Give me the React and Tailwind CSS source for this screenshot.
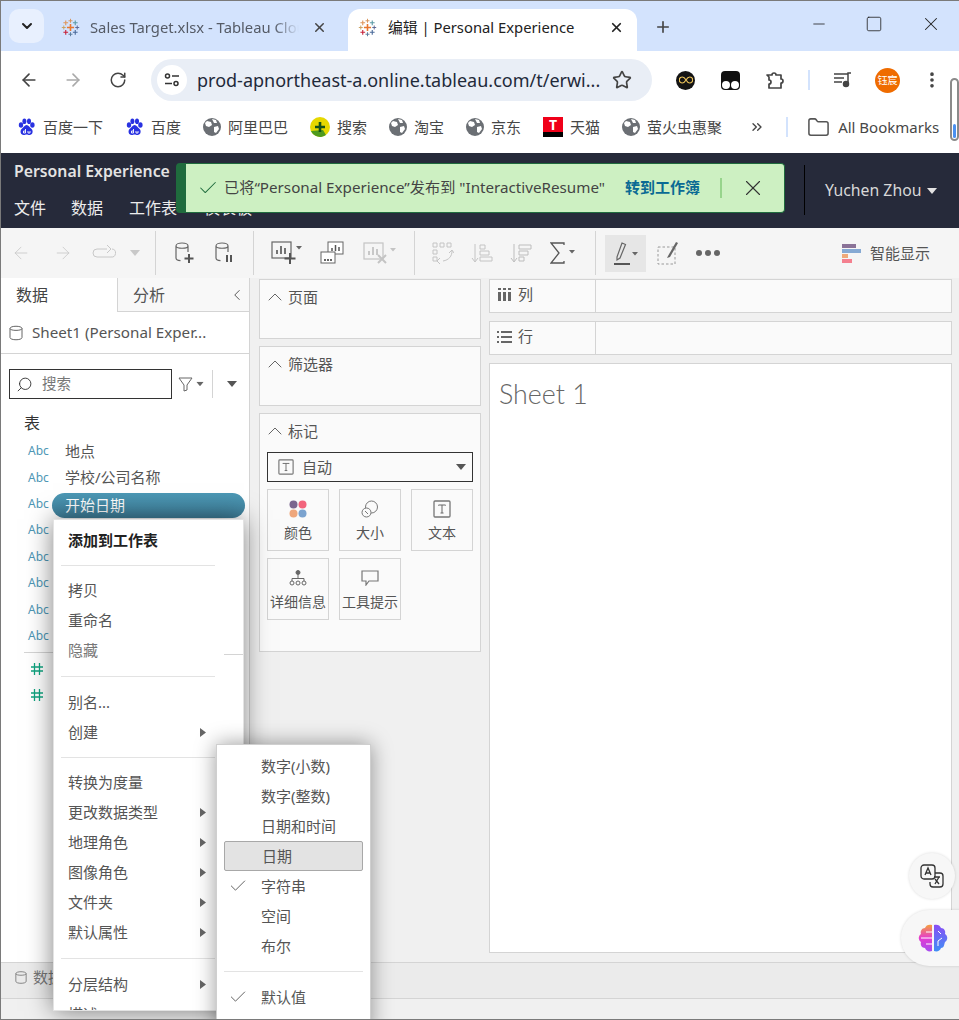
import React from 'react';
import {
  ArrowLeft, ArrowRight, RotateCw, Star, X, Plus, ChevronDown, ChevronUp, ChevronLeft, ChevronsRight,
  EllipsisVertical, Folder, Minus, Square, Check, Search,
} from 'lucide-react';

const Caret = ({ className = '' }) => (
  <svg width="10" height="6" viewBox="0 0 10 6" className={className}><path d="M0 0h10L5 6z" fill="currentColor" /></svg>
);

const RightCaret = () => (
  <svg width="6" height="9" viewBox="0 0 6 9" className="text-[#666]"><path d="M0 0l6 4.5L0 9z" fill="currentColor" /></svg>
);

const TableauLogo = () => {
  const marks = [
    [12, 12, 4.5, 2, '#e8762d'], [12, 3.5, 2.5, 1.2, '#d6925a'], [12, 20.5, 2.5, 1.2, '#59799a'],
    [3.5, 12, 2.5, 1.2, '#c9a05f'], [20.5, 12, 2.5, 1.2, '#5b6591'],
    [6, 6, 3, 1.4, '#e0965a'], [18, 6, 3, 1.4, '#5b9aa5'], [6, 18, 3, 1.4, '#c72037'], [18, 18, 3, 1.4, '#4a6a9a'],
  ];
  return (
    <svg width="19" height="19" viewBox="0 0 24 24" className="shrink-0">
      {marks.map(([x, y, s, w, c], i) => (
        <path key={i} d={`M${x - s} ${y}H${x + s}M${x} ${y - s}V${y + s}`} stroke={c} strokeWidth={w} fill="none" />
      ))}
    </svg>
  );
};

const Globe = () => (
  <svg width="18" height="18" viewBox="0 0 18 18" className="shrink-0">
    <circle cx="9" cy="9" r="9" fill="#6b6f74" />
    <path d="M4 3l4 1 1 3-3 2-3-1-1-3zM11 9l4-1 1 3-3 4-2-1zM9 1l4 1 1 3-3 0z" fill="#fff" />
  </svg>
);

const BaiduPaw = () => (
  <svg width="19" height="19" viewBox="0 0 19 19" className="shrink-0">
    <g fill="#2932e1">
      <ellipse cx="4" cy="7" rx="2.2" ry="2.8" />
      <ellipse cx="7.4" cy="3.2" rx="2" ry="2.8" />
      <ellipse cx="12" cy="3.2" rx="2" ry="2.8" />
      <ellipse cx="15.4" cy="7" rx="2.2" ry="2.8" />
      <path d="M9.6 7c2.2 0 3 2.4 5 4 2 2 1 6-2 6-1.500 0-2-.5-3-.5s-1.500.5-3 .5c-3 0-4-4-2-6 2-1.600 2.800-4 5-4z" />
    </g>
    <path d="M8.500 11v4h-2v-2h2M11 13v2h2v-2" stroke="#fff" strokeWidth="0.9" fill="none" />
  </svg>
);

const SearchBall = () => (
  <svg width="20" height="20" viewBox="0 0 20 20" className="shrink-0">
    <circle cx="10" cy="10" r="10" fill="#e6d800" />
    <path d="M1 14a10 10 0 0 0 15 4l-3-5z" fill="#4f9a1e" />
    <path d="M10 5v10M5 10h10" stroke="#14501a" strokeWidth="2.6" />
  </svg>
);

const TmallIcon = () => (
  <span className="relative flex h-[20px] w-[20px] shrink-0 flex-col">
    <span className="flex h-[15px] items-center justify-center bg-[#f00019] text-[14px] font-bold leading-none text-white">T</span>
    <span className="h-[5px] bg-black" />
  </span>
);

const Bookmark = ({ icon, label, className = '' }) => (
  <div className={`flex items-center gap-[7px] ${className}`}>
    {icon}
    <span className="text-[15px] text-[#474747]">{label}</span>
  </div>
);

const Db = ({ children }) => (
  <svg width="22" height="24" viewBox="0 0 22 24" fill="none" className="text-[#666]">
    <path d="M2 5c0-4 12-4 12 0v6M2 5c0 3 12 3 12 0M2 5v12c0 1.500 2 2.500 4.500 2.700" stroke="currentColor" strokeWidth="1.200" />
    {children}
  </svg>
);

const ChartBars = ({ faded }) => (
  <g stroke={faded ? '#c4c4c4' : '#666'} strokeWidth="1.800">
    <path d="M6 14v-4M10 14V6M14 14V8" />
  </g>
);

const ToolSep = () => <div className="mx-0 h-[44px] w-px bg-[#d4d4d4]" />;

const toolbarLeft = (
  <>
    <div className="flex w-[154px] items-center pl-[10px] text-[#c8c8c8]">
      <ArrowLeft size={20} strokeWidth={1} className="w-[20px]" />
      <ArrowRight size={20} strokeWidth={1} className="ml-[22px]" />
      <svg width="24" height="16" viewBox="0 0 24 16" fill="none" className="ml-[19px]">
        <path d="M15 4H5a4 4 0 0 0 0 8h14a4 4 0 0 0 1-8M15 0l4 4-4 4" stroke="currentColor" strokeWidth="1" />
      </svg>
      <Caret className="ml-[14px]" />
    </div>
    <ToolSep />
    <div className="flex w-[97px] items-center pl-[18px]">
      <Db><path d="M15 13v9M10.500 17.500h9" stroke="#555" strokeWidth="2" /></Db>
      <div className="ml-[18px]"><Db><path d="M13 14v7M17 14v7" stroke="#555" strokeWidth="2" /></Db></div>
    </div>
    <ToolSep />
    <div className="flex w-[160px] items-center pl-[17px]">
      <svg width="32" height="26" viewBox="0 0 32 26" fill="none">
        <rect x="1" y="2" width="19" height="16" stroke="#666" strokeWidth="1.200" />
        <ChartBars />
        <path d="M19 13v11M13.500 18.500h11" stroke="#555" strokeWidth="2" />
        <path d="M25 6h6l-3 3.500z" fill="#666" />
      </svg>
      <svg width="24" height="24" viewBox="0 0 24 24" fill="none" className="ml-[17px]">
        <rect x="8" y="1" width="15" height="12" fill="#fff" stroke="#666" />
        <path d="M12 10V7M15.500 10V4M19 10V6" stroke="#555" strokeWidth="1.500" />
        <rect x="1" y="11" width="14" height="11" fill="#fff" stroke="#666" />
        <path d="M4 19h8" stroke="#666" strokeWidth="2" strokeDasharray="2 1" />
      </svg>
      <svg width="34" height="24" viewBox="0 0 34 24" fill="none" className="ml-[19px]">
        <rect x="1" y="2" width="19" height="16" stroke="#c4c4c4" strokeWidth="1.200" />
        <ChartBars faded />
        <path d="M15 14l8 8M23 14l-8 8" stroke="#c4c4c4" strokeWidth="2" />
        <path d="M27 7h6l-3 3.500z" fill="#c4c4c4" />
      </svg>
    </div>
    <ToolSep />
    <div className="flex w-[180px] items-center pl-[17px]">
      <svg width="22" height="24" viewBox="0 0 22 24" fill="none" stroke="#c4c4c4">
        <path d="M1 2h4v4H1zM8 2h4v4H8zM15 2h4v4h-4zM1 9h4v4H1zM1 16h4v4H1z" />
        <path d="M20 10c0 5-3 9-9 10M8 17l-3 3 3 3M17 12l3-3 2 3" />
      </svg>
      <svg width="22" height="24" viewBox="0 0 22 24" fill="none" stroke="#c4c4c4" className="ml-[17px]">
        <path d="M4 3v17M1 17l3 4 3-4" />
        <path d="M9 4h5v4H9zM9 10h9v4H9zM9 16h12v4H9z" />
      </svg>
      <svg width="22" height="24" viewBox="0 0 22 24" fill="none" stroke="#bdbdbd" className="ml-[17px]">
        <path d="M4 3v17M1 17l3 4 3-4" />
        <path d="M9 4h12v4H9zM9 10h9v4H9zM9 16h5v4H9z" />
      </svg>
      <svg width="26" height="22" viewBox="0 0 26 22" fill="none" className="ml-[18px]">
        <path d="M14 3V1H1l8 10-8 10h13v-2" stroke="#555" strokeWidth="1.300" />
        <path d="M19 8h6l-3 3.500z" fill="#666" />
      </svg>
    </div>
    <ToolSep />
  </>
);

const Card = ({ label, className = '', children }) => (
  <div className={`border border-[#d4d4d4] bg-[#fafafa] ${className}`}>
    <div className="flex h-[27px] items-center pl-[3px] pt-[7px] text-[15px] leading-[20px] text-[#555]">
      <ChevronUp size={24} strokeWidth={0.900} className="text-[#555]" />
      <span className="ml-[1px]">{label}</span>
    </div>
    {children}
  </div>
);

const MarkButton = ({ icon, label }) => (
  <div className="flex h-[62px] w-[62px] flex-col items-center border border-[#d4d4d4] bg-[#fafafa] pt-[10px]">
    <div className="flex h-[18px] items-center">{icon}</div>
    <span className="mt-[6px] whitespace-nowrap text-[14px] leading-[18px] text-[#555]">{label}</span>
  </div>
);

const TextBox = ({ size = 18 }) => (
  <svg width={size} height={size} viewBox="0 0 18 18" fill="none">
    <rect x="1" y="1" width="16" height="16" rx="1" stroke="#777" strokeWidth="1.300" />
    <path d="M5.500 5.500v-.5h7v.5M9 5v8M7.500 13h3" stroke="#666" />
  </svg>
);

const ShelfRow = ({ icon, label }) => (
  <div className="flex h-[34px] border border-[#d4d4d4] bg-[#fafafa]">
    <div className="flex w-[106px] items-center border-r border-[#d4d4d4] pb-[3px] pl-[7px]">
      {icon}
      <span className="ml-[6px] text-[15px] text-[#555]">{label}</span>
    </div>
  </div>
);

const MenuItem = ({ label, bold, sub, muted }) => (
  <div className="flex h-[30px] shrink-0 items-center justify-between pl-[14px] pr-[37px]">
    <span className={`text-[15px] ${bold ? 'font-bold text-[#222]' : muted ? 'text-[#777]' : 'text-[#555]'}`}>{label}</span>
    {sub && <RightCaret />}
  </div>
);

const MenuDivider = ({ tall }) => (
  <div className={`ml-[7px] mr-[28px] h-px shrink-0 bg-[#e3e3e3] ${tall ? 'my-[10.500px]' : 'my-[9.500px]'}`} />
);

const SubItem = ({ label, checked, active }) => (
  <div className={`relative mx-[7px] flex h-[30px] items-center pl-[37px] text-[15px] text-[#555] ${active ? 'rounded-[2px] border border-[#a8a8a8] bg-[#e3e3e3]' : ''}`}>
    {checked && <Check size={20} strokeWidth={1} className="absolute left-[4px] text-[#444]" />}
    {label}
  </div>
);

const Hash = () => (
  <svg width="14" height="14" viewBox="0 0 14 14" fill="none" stroke="#0fa37f" strokeWidth="1.300">
    <path d="M4.500 1v12M9.500 1v12M1 5h12M1 9h12" />
  </svg>
);

const abcRows = ['地点', '学校/公司名称', '开始日期', '', '', '', '', ''];

const bookmarks = [
  { icon: <BaiduPaw />, label: '百度一下' },
  { icon: <BaiduPaw />, label: '百度' },
  { icon: <Globe />, label: '阿里巴巴' },
  { icon: <SearchBall />, label: '搜索' },
  { icon: <Globe />, label: '淘宝' },
  { icon: <Globe />, label: '京东' },
  { icon: <TmallIcon />, label: '天猫' },
  { icon: <Globe />, label: '萤火虫惠聚' },
];

export default function App() {
  return (
    <div className="relative h-[1020px] w-[959px] overflow-hidden border-y border-l border-[#7a7a7a] bg-white font-['Noto_Sans','Noto_Sans_CJK_SC',sans-serif]">
      {/* Browser tabs */}
      <div className="flex h-[50px] items-end bg-[#d3e3fd]">
        <div className="mb-[8px] ml-[8px] flex h-[34px] w-[35px] items-center justify-center rounded-[10px] bg-[#e8f0fe]">
          <ChevronDown size={16} strokeWidth={3} className="text-[#222]" />
        </div>
        <div className="ml-[17px] flex h-[42px] w-[287px] items-center pb-[6px]">
          <TableauLogo />
          <span className="ml-[10px] w-[209px] overflow-hidden whitespace-nowrap text-[14.800px] text-[#555b66] [mask-image:linear-gradient(to_right,black_88%,transparent)]">Sales Target.xlsx - Tableau Cloud</span>
          <X size={15} strokeWidth={2.400} className="ml-[13px] text-[#444]" />
        </div>
        <div className="flex h-[42px] w-[289px] items-center rounded-t-[12px] bg-white pb-[6px] pl-[10px]">
          <TableauLogo />
          <span className="ml-[11px] w-[210px] whitespace-nowrap text-[14.800px] text-[#222]">编辑 | Personal Experience</span>
          <X size={15} strokeWidth={2.800} className="ml-[11px] text-[#222]" />
        </div>
        <Plus size={18} strokeWidth={2.200} className="mb-[15px] ml-[17px] text-[#444]" />
        <div className="mb-[16px] ml-[auto] flex items-center pr-[17px] text-[#222]">
          <Minus size={18} strokeWidth={1.100} />
          <Square size={18} strokeWidth={1.100} className="ml-[37px]" />
          <X size={22} strokeWidth={1.100} className="ml-[37px]" />
        </div>
      </div>

      {/* Address bar */}
      <div className="flex h-[52px] items-center rounded-t-[10px] bg-white pl-[18px] pt-[6px]">
        <ArrowLeft size={20} strokeWidth={2} className="text-[#444]" />
        <ArrowRight size={20} strokeWidth={2} className="ml-[24px] text-[#aaa]" />
        <RotateCw size={18} strokeWidth={2} className="ml-[26px] text-[#444]" />
        <div className="ml-[24px] flex h-[42px] w-[501px] items-center rounded-full bg-[#e9eef6] pl-[6px]">
          <div className="flex h-[30px] w-[30px] items-center justify-center rounded-full bg-white">
            <svg width="16" height="14" viewBox="0 0 16 14" fill="none" stroke="#333" strokeWidth="1.500">
              <circle cx="3.500" cy="3" r="2" /><path d="M8 3h7M1 10.500h7" /><circle cx="12" cy="10.500" r="2" />
            </svg>
          </div>
          <span className="ml-[10px] w-[403px] whitespace-nowrap text-[18px] text-[#1f2a3a]">prod-apnortheast-a.online.tableau.com/t/erwi...</span>
          <Star size={20} strokeWidth={2} className="ml-[12px] text-[#444]" />
        </div>
        <div className="ml-[24px] flex h-[19px] w-[19px] items-center justify-center rounded-full bg-[#141414]">
          <svg width="14" height="8" viewBox="0 0 14 8" fill="none" stroke="#eec55b" strokeWidth="1.200">
            <path d="M7 4C5.500 1.500 4.500 1 3.300 1a3 3 0 0 0 0 6C4.500 7 5.500 6.500 7 4c1.500-2.500 2.500-3 3.700-3a3 3 0 0 1 0 6C9.500 7 8.500 6.500 7 4z" />
          </svg>
        </div>
        <div className="relative ml-[26px] h-[19px] w-[19px] rounded-[4px] bg-[#111]">
          <span className="absolute bottom-[1px] left-[1px] h-[8px] w-[8px] rounded-full bg-white" />
          <span className="absolute bottom-[1px] right-[1px] h-[8px] w-[8px] rounded-full bg-white" />
        </div>
        <svg width="20" height="20" viewBox="0 0 20 20" fill="none" stroke="#444" strokeWidth="1.700" className="ml-[26px]">
          <path d="M1 5h5a2 2 0 0 1 4 0h5v4a2 2 0 0 1 0 4v5H3v-4a2 2 0 0 0 0-4V7z" strokeLinejoin="round" />
        </svg>
        <div className="ml-[22px] h-[20px] w-[2px] bg-[#d3e3fd]" />
        <svg width="20" height="16" viewBox="0 0 20 16" fill="none" stroke="#444" strokeWidth="1.500" className="ml-[23px]">
          <path d="M1 2h14M1 6h10M1 10h8M18 1h-3v11" />
          <circle cx="13" cy="12" r="2.500" fill="#444" />
        </svg>
        <div className="ml-[22px] flex h-[25px] w-[25px] items-center justify-center rounded-full bg-[#ef6c00] text-[10px] text-white">钰宸</div>
        <EllipsisVertical size={20} strokeWidth={2.400} className="ml-[22px] text-[#444]" />
      </div>

      {/* Bookmarks */}
      <div className="flex h-[50px] items-center pb-[2px] pl-[16px]">
        <div className="flex items-center gap-[22px]">
          {bookmarks.map((b, i) => (
            <Bookmark key={i} icon={b.icon} label={b.label} />
          ))}
        </div>
        <ChevronsRight size={16} strokeWidth={2} className="ml-[27px] text-[#444]" />
        <div className="ml-[21px] h-[20px] w-[2px] bg-[#d3e3fd]" />
        <Folder size={23} strokeWidth={1.600} className="ml-[19px] text-[#555]" />
        <span className="ml-[8px] whitespace-nowrap text-[15px] text-[#474747]">All Bookmarks</span>
      </div>

      {/* Tableau header */}
      <div className="flex h-[75px] flex-col bg-[#262a3a] pl-[13px]">
        <div className="flex h-[37px] items-center text-[15.800px] font-semibold text-[#e3e3e3]">Personal Experience</div>
        <div className="flex h-[35px] items-center text-[16px] text-[#ececec]">
          <span>文件</span>
          <span className="ml-[25px]">数据</span>
          <span className="ml-[26px]">工作表</span>
          <span className="ml-[27px]">仪表板</span>
          <div className="absolute right-[154px] top-[164px] h-[50px] w-px bg-black" />
          <div className="absolute left-[824px] top-[178px] flex items-center text-[15.800px] text-[#d8d8d8]">
            Yuchen Zhou
            <Caret className="ml-[6px] text-[#e3e3e3]" />
          </div>
        </div>
      </div>

      {/* Tableau toolbar */}
      <div className="flex h-[50px] items-center bg-[#f5f5f5]">
        {toolbarLeft}
        <div className="ml-[9px] flex h-[37px] w-[41px] items-center justify-center bg-[#e6e6e6]">
          <svg width="28" height="26" viewBox="0 0 28 26" fill="none">
            <path d="M5 17l5-14 3.500 1.500L8 18l-3 2z" stroke="#666" strokeWidth="1.200" />
            <path d="M2 24h16" stroke="#555" strokeWidth="2" />
            <path d="M20 12h6l-3 3.500z" fill="#666" />
          </svg>
        </div>
        <svg width="22" height="24" viewBox="0 0 22 24" fill="none" className="ml-[11px]">
          <rect x="1" y="6" width="17" height="17" stroke="#999" strokeDasharray="2.500 2" />
          <path d="M11 15l8-14 2 1-8 14-3 1z" fill="#666" />
        </svg>
        <div className="ml-[17px] flex gap-[3px]">
          <span className="h-[6px] w-[6px] rounded-full bg-[#666]" />
          <span className="h-[6px] w-[6px] rounded-full bg-[#666]" />
          <span className="h-[6px] w-[6px] rounded-full bg-[#666]" />
        </div>
        <div className="ml-[122px] flex items-center">
          <div className="flex w-[19px] flex-col gap-[1px]">
            <span className="h-[4px] w-[14px] bg-[#8a7297]" />
            <span className="h-[4px] w-[19px] bg-[#86a9d3]" />
            <span className="h-[4px] w-[6px] bg-[#efa97a]" />
            <span className="h-[4px] w-[10px] bg-[#f4808f]" />
          </div>
          <span className="ml-[9px] text-[15px] text-[#555]">智能显示</span>
        </div>
      </div>

      {/* Workspace */}
      <div className="flex h-[684px] bg-[#f0f0f0]">
        <div className="w-[249px] shrink-0 border-r border-[#d4d4d4] bg-white">
          <div className="flex h-[34px]">
            <div className="flex w-[116px] items-center pl-[15px] text-[16px] text-[#444]">数据</div>
            <div className="flex flex-1 items-center border-b border-l border-[#d4d4d4] bg-[#f8f8f8] pl-[15px] text-[16px] text-[#555]">
              分析
              <ChevronLeft size={18} strokeWidth={1.300} className="ml-auto mr-[3px] text-[#555]" />
            </div>
          </div>
          <div className="flex h-[42px] items-center border-b border-[#d4d4d4] pl-[8px] text-[15.200px] text-[#555]">
            <svg width="14" height="16" viewBox="0 0 14 16" fill="none" stroke="#666">
              <path d="M1 3.500C1 .5 13 .5 13 3.500v9c0 3-12 3-12 0zM1 3.500c0 2.500 12 2.500 12 0" />
            </svg>
            <span className="ml-[9px] whitespace-nowrap">Sheet1 (Personal Exper...</span>
          </div>
          <div className="flex items-center pl-[8px] pt-[15px]">
            <div className="flex h-[30px] w-[163px] items-center border border-[#333] pl-[6px] text-[14.500px] text-[#777]">
              <Search size={17} strokeWidth={1.300} className="-scale-x-100 text-[#333]" />
              <span className="ml-[9px]">搜索</span>
            </div>
            <svg width="16" height="15" viewBox="0 0 16 15" fill="none" stroke="#666" className="ml-[6px]">
              <path d="M1 1h13L9 8v5l-3 1V8z" />
            </svg>
            <Caret className="ml-[1px] scale-75 text-[#666]" />
            <div className="ml-[7px] h-[28px] w-px bg-[#d4d4d4]" />
            <Caret className="ml-[14px] text-[#555]" />
          </div>
          <div className="pl-[23px] pt-[12px] text-[16px] leading-[24px] text-[#333]">表</div>
          <div className="mt-[3px] flex flex-col">
            {abcRows.map((name, i) => (
              <div key={i} className="flex h-[26.400px] items-center pl-[27px]">
                <span className="w-[37px] text-[12px] text-[#4e96b5]">Abc</span>
                {name !== '开始日期' && <span className="text-[15px] text-[#555]">{name}</span>}
              </div>
            ))}
          </div>
          <div className="mx-[23px] mt-[2.500px] h-px bg-[#d4d4d4]" />
          <div className="flex flex-col pt-[3px]">
            {[0, 1].map((i) => (
              <div key={i} className="flex h-[26px] items-center pl-[29px]"><Hash /></div>
            ))}
          </div>
        </div>

        <div className="flex w-[239px] shrink-0 flex-col gap-[7px] pl-[9px] pt-[1px]">
          <Card label="页面" className="h-[60px] w-[222px]" />
          <Card label="筛选器" className="h-[60px] w-[222px]" />
          <Card label="标记" className="h-[239px] w-[222px]">
            <div className="px-[7px] pt-[11px]">
              <div className="flex h-[30px] items-center border border-[#333] pl-[10px] text-[15px] text-[#555]">
                <TextBox size={16} />
                <span className="ml-[8px]">自动</span>
                <Caret className="ml-auto mr-[6px] text-[#555]" />
              </div>
              <div className="mt-[7px] grid grid-cols-[62px_62px_62px] gap-x-[10px] gap-y-[7px]">
                <MarkButton label="颜色" icon={
                  <svg width="18" height="18" viewBox="0 0 18 18">
                    <circle cx="4.500" cy="4.500" r="4" fill="#7b668f" /><circle cx="13.500" cy="4.500" r="4" fill="#f2647c" />
                    <circle cx="4.500" cy="13.500" r="4" fill="#efa77c" /><circle cx="13.500" cy="13.500" r="4" fill="#7ba3cf" />
                  </svg>
                } />
                <MarkButton label="大小" icon={
                  <svg width="18" height="18" viewBox="0 0 18 18" fill="none" stroke="#777">
                    <circle cx="10.500" cy="7" r="6" /><circle cx="5.500" cy="12.500" r="4.500" fill="#fafafa" /><path d="M4 11l3 3" />
                  </svg>
                } />
                <MarkButton label="文本" icon={<TextBox />} />
                <MarkButton label="详细信息" icon={
                  <svg width="18" height="16" viewBox="0 0 18 16" fill="none" stroke="#666">
                    <circle cx="9" cy="2.500" r="2" fill="#666" /><path d="M9 5v4M3 11V8.500h12V11" />
                    <circle cx="3" cy="13" r="2" /><circle cx="9" cy="13" r="2" /><circle cx="15" cy="13" r="2" />
                  </svg>
                } />
                <MarkButton label="工具提示" icon={
                  <svg width="18" height="16" viewBox="0 0 18 16" fill="none" stroke="#777" strokeWidth="1.200">
                    <path d="M1 1h16v10H8l-3 4v-4H1z" />
                  </svg>
                } />
              </div>
            </div>
          </Card>
        </div>

        <div className="flex w-[463px] shrink-0 flex-col pt-[1px]">
          <ShelfRow label="列" icon={
            <svg width="15" height="13" viewBox="0 0 15 13" fill="#666"><path d="M1 4h3v9H1zM6 4h3v9H6zM11 4h3v9h-3zM1 0h3v2H1zM6 0h3v2H6zM11 0h3v2h-3z" /></svg>
          } />
          <div className="mt-[8px]">
            <ShelfRow label="行" icon={
              <svg width="15" height="12" viewBox="0 0 15 12" fill="#666"><path d="M0 0h2v2H0zM4 0h11v2H4zM0 5h2v2H0zM4 5h11v2H4zM0 10h2v2H0zM4 10h11v2H4z" /></svg>
            } />
          </div>
          <div className="mt-[8px] h-[590px] border border-[#d4d4d4] bg-white pl-[9px] pt-[12px] font-['Lato',sans-serif] text-[26.800px] font-light leading-[36px] text-[#666]">Sheet 1</div>
        </div>
      </div>

      {/* Status bar */}
      <div className="flex h-[37px] items-center border-y border-[#d4d4d4] bg-[#ebebeb] pb-[6px] pl-[14px] text-[15px] text-[#777]">
        <svg width="12" height="15" viewBox="0 0 14 16" fill="none" stroke="#777">
          <path d="M1 3.500C1 .5 13 .5 13 3.500v9c0 3-12 3-12 0zM1 3.500c0 2.500 12 2.500 12 0" />
        </svg>
        <span className="ml-[6px]">数据源</span>
      </div>
      <div className="h-[20px] bg-[#f0f0f0]" />

      {/* Toast */}
      <div className="absolute left-[175px] top-[162px] flex h-[50px] w-[609px] items-center rounded-[4px] border border-l-[10px] border-[#1f6b3d] bg-[#cdf0c2] pb-[1px] pl-[11px]">
        <Check size={22} strokeWidth={1.100} className="text-[#1f6b3d]" />
        <span className="ml-[5px] whitespace-nowrap text-[15.200px] text-[#444]">已将“Personal Experience”发布到 "InteractiveResume"</span>
        <span className="ml-[20px] whitespace-nowrap text-[15px] font-bold text-[#0a6a94]">转到工作簿</span>
        <div className="ml-[20px] h-[20px] w-[2px] bg-[#97d48c]" />
        <X size={26} strokeWidth={1} className="ml-[18px] text-[#333]" />
      </div>

      {/* Selected field pill */}
      <div className="absolute left-[51px] top-[492px] flex h-[25px] w-[193px] items-center rounded-full bg-gradient-to-b from-[#4c98b5] to-[#3f7f9a] pl-[13px] text-[15px] text-white">开始日期</div>

      {/* Context menu */}
      <div className="absolute left-[52px] top-[518px] flex h-[492px] w-[191px] flex-col overflow-hidden border border-[#e3e3e3] bg-white pt-[5px] shadow-[0_0_24px_rgba(0,0,0,0.5)]">
        <MenuItem label="添加到工作表" bold />
        <MenuDivider />
        <MenuItem label="拷贝" />
        <MenuItem label="重命名" />
        <MenuItem label="隐藏" muted />
        <MenuDivider tall />
        <MenuItem label="别名..." />
        <MenuItem label="创建" sub />
        <MenuDivider />
        <MenuItem label="转换为度量" />
        <MenuItem label="更改数据类型" sub />
        <MenuItem label="地理角色" sub />
        <MenuItem label="图像角色" sub />
        <MenuItem label="文件夹" sub />
        <MenuItem label="默认属性" sub />
        <MenuDivider tall />
        <MenuItem label="分层结构" sub />
        <MenuItem label="描述" />
        <div className="absolute left-[170px] top-[134px] h-px w-[19px] bg-[#d4d4d4]" />
      </div>

      {/* Data type submenu */}
      <div className="absolute left-[215px] top-[743px] h-[290px] w-[155px] border border-[#cfcfcf] bg-white pt-[6px] shadow-[0_0_20px_rgba(0,0,0,0.4)]">
        <SubItem label="数字(小数)" />
        <SubItem label="数字(整数)" />
        <SubItem label="日期和时间" />
        <SubItem label="日期" active />
        <SubItem label="字符串" checked />
        <SubItem label="空间" />
        <SubItem label="布尔" />
        <div className="mx-[7px] my-[10px] h-px bg-[#e3e3e3]" />
        <SubItem label="默认值" checked />
      </div>

      {/* Floating extension buttons */}
      <div className="absolute left-[908px] top-[852px] flex h-[46px] w-[46px] items-center justify-center rounded-full bg-[#f7f7f7] shadow-[0_0_3px_rgba(0,0,0,0.15)]">
        <svg width="24" height="24" viewBox="0 0 24 24" fill="none" stroke="#333" strokeWidth="1.300">
          <rect x="1" y="1" width="14" height="14" rx="3" fill="#f7f7f7" />
          <path d="M5 11l3-7 3 7M6 9h4" />
          <path d="M15 9h5a3 3 0 0 1 3 3v8a3 3 0 0 1-3 3h-7a3 3 0 0 1-3-3v-2" />
          <path d="M14 13h6M19 13l-4 7M15 15l4 5" />
        </svg>
      </div>
      <div className="absolute left-[900px] top-[909px] flex h-[56px] w-[80px] items-center rounded-l-full bg-[#f7f7f7] pl-[17px] shadow-[0_0_3px_rgba(0,0,0,0.15)]">
        <svg width="30" height="30" viewBox="0 0 30 30" fill="none">
          <defs>
            <linearGradient id="brainL" x1="0" y1="0" x2="0" y2="1"><stop offset="0" stopColor="#f5a13a" /><stop offset="0.5" stopColor="#e53bd0" /><stop offset="1" stopColor="#a64df0" /></linearGradient>
            <linearGradient id="brainR" x1="0" y1="0" x2="0" y2="1"><stop offset="0" stopColor="#8a4df5" /><stop offset="1" stopColor="#3f8ff5" /></linearGradient>
          </defs>
          <path d="M14 2c-3-1-6 0-7 3-3 0-5 3-4 6-3 2-3 6 0 8-1 3 1 6 4 6 1 3 4 4 7 3z" fill="url(#brainL)" />
          <path d="M16 2c3-1 6 0 7 3 3 0 5 3 4 6 3 2 3 6 0 8-1 3-1 6-4 6-1 3-4 4-7 3z" fill="url(#brainR)" />
          <path d="M3 15h11M8 9h6M8 21h6M20 8l3 3M24 15l-4 3v5" stroke="#fff" strokeWidth="1" />
        </svg>
      </div>

      {/* Chrome scrollbar tab at the edge */}
      <div className="absolute left-[949px] top-[77px] h-[63px] w-[9px] rounded-full border-2 border-[#8a8a8a] bg-white">
        <div className="absolute bottom-[1px] left-[1px] h-[14px] w-[3px] rounded-full bg-[#4a90f0]" />
      </div>
    </div>
  );
}
